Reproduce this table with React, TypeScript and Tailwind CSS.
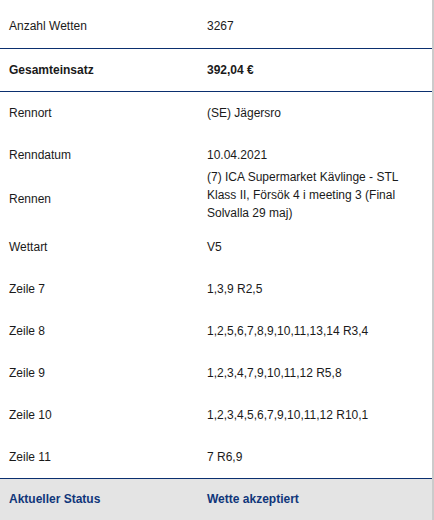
import * as React from "react"

type Row = {
  label: string
  value: string
  bold?: boolean
  line?: boolean
  tall?: boolean
}

const ROWS: Row[] = [
  { label: "Gesamteinsatz", value: "392,04 €", bold: true, line: true },
  { label: "Rennort", value: "(SE) Jägersro" },
  { label: "Renndatum", value: "10.04.2021" },
  {
    label: "Rennen",
    value: "(7) ICA Supermarket Kävlinge - STL Klass II, Försök 4 i meeting 3 (Final Solvalla 29 maj)",
    tall: true,
  },
  { label: "Wettart", value: "V5" },
  { label: "Zeile 7", value: "1,3,9 R2,5" },
  { label: "Zeile 8", value: "1,2,5,6,7,8,9,10,11,13,14 R3,4" },
  { label: "Zeile 9", value: "1,2,3,4,7,9,10,11,12 R5,8" },
  { label: "Zeile 10", value: "1,2,3,4,5,6,7,9,10,11,12 R10,1" },
  { label: "Zeile 11", value: "7 R6,9", line: true },
]

export default function App() {
  return (
    <div
      className="h-[520px] w-[434px] overflow-hidden bg-white text-[12px] leading-[17px] text-[#1a1a1a]"
      style={{ fontFamily: '"Liberation Sans", Arial, sans-serif' }}
    >
      <div className="box-content flex h-full w-[432px] flex-col border-r-2 border-[#cbcbcb]">
        <div className="grid h-[49px] shrink-0 grid-cols-[207px_1fr] items-center border-b border-[#0b2f6f] pt-[4px]">
          <div className="pl-[9px]">Anzahl Wetten</div>
          <div className="pr-[9px]">3267</div>
        </div>

        {ROWS.map((row) => (
          <div
            key={row.label}
            className={
              "grid shrink-0 grid-cols-[207px_1fr] items-center " +
              (row.tall ? "h-[50px] " : row.line ? "h-[43px] " : "h-[42px] ") +
              (row.line ? "border-b border-[#0b2f6f] " : "") +
              (row.bold ? "font-bold" : "")
            }
          >
            <div className={row.tall ? "-mt-[4px] pl-[9px]" : "pl-[9px]"}>{row.label}</div>
            <div className={row.tall ? "-mt-[12px] pr-[9px] leading-[18px]" : "pr-[9px]"}>
              {row.value}
            </div>
          </div>
        ))}

        {/* status */}
        <div className="grid flex-1 grid-cols-[207px_1fr] items-center bg-[#e4e4e4] font-bold text-[#10367a]">
          <div className="pl-[9px]">Aktueller Status</div>
          <div className="pr-[9px]">Wette akzeptiert</div>
        </div>
      </div>
    </div>
  )
}
